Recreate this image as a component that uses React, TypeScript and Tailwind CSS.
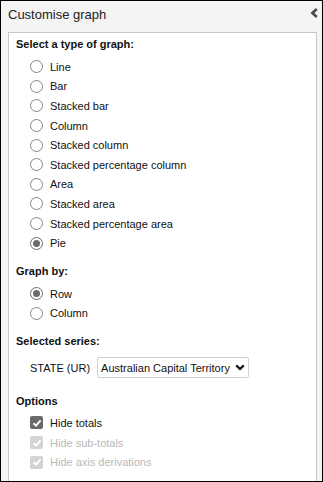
import React from "react";

const graphTypes = [
  "Line",
  "Bar",
  "Stacked bar",
  "Column",
  "Stacked column",
  "Stacked percentage column",
  "Area",
  "Stacked area",
  "Stacked percentage area",
  "Pie",
];

function Radio({ label, checked = false }: { label: string; checked?: boolean }) {
  return (
    <div className="flex h-[19.6px] items-center pl-[14px]">
      <span
        className={
          "flex h-[13px] w-[13px] items-center justify-center rounded-full border bg-white " +
          (checked ? "border-[#6b6b6b]" : "border-[#858585]")
        }
      >
        {checked && <span className="h-[7px] w-[7px] rounded-full bg-[#6b6b6b]" />}
      </span>
      <span className="ml-[7px] text-[11px] leading-[16px] text-[#111]">{label}</span>
    </div>
  );
}

function Checkbox({ label, disabled = false }: { label: string; disabled?: boolean }) {
  return (
    <div className="flex h-[19.6px] items-center pl-[14px]">
      <span
        className={
          "flex h-[13px] w-[13px] items-center justify-center rounded-[2px] " +
          (disabled ? "bg-[#d4d4d4]" : "bg-[#6b6b6b]")
        }
      >
        <svg width="10" height="10" viewBox="0 0 10 10">
          <polyline points="1.5,5.2 4,7.6 8.6,2.4" fill="none" stroke="white" strokeWidth="1.9" />
        </svg>
      </span>
      <span
        className={
          "ml-[7px] text-[11px] leading-[16px] " + (disabled ? "text-[#b8b8b8]" : "text-[#111]")
        }
      >
        {label}
      </span>
    </div>
  );
}

function Heading({ children, className = "" }: { children: React.ReactNode; className?: string }) {
  return <div className={"text-[11px] font-bold leading-[16px] text-[#111] " + className}>{children}</div>;
}

export default function App() {
  return (
    <div
      className="flex h-[482px] w-[323px] flex-col overflow-hidden border border-black bg-[#f4f4f4]"
      style={{ fontFamily: '"Liberation Sans", Arial, sans-serif' }}
    >
      <div className="flex h-[31px] shrink-0 items-start justify-between pl-[7px] pr-[3px] pt-[6px]">
        <span className="text-[13px] leading-[16px] text-[#222]">Customise graph</span>
        <svg width="9" height="10" viewBox="0 0 9 10" className="mt-[1px]">
          <polyline points="6.8,1 2.4,5 6.8,9" fill="none" stroke="#4a4a4a" strokeWidth="2.6" />
        </svg>
      </div>

      <div className="ml-[7px] w-[309px] flex-1 border border-b-0 border-[#c8c8c8] bg-white pl-[7px]">
        <Heading className="mt-[3px]">Select a type of graph:</Heading>
        <div className="mt-[5px]">
          {graphTypes.map((t) => (
            <Radio key={t} label={t} checked={t === "Pie"} />
          ))}
        </div>

        <Heading className="mt-[10px]">Graph by:</Heading>
        <div className="mt-[5px]">
          <Radio label="Row" checked />
          <Radio label="Column" />
        </div>

        <Heading className="mt-[10px]">Selected series:</Heading>
        <div className="mt-[8px] flex items-center pl-[14px]">
          <span className="text-[11px] leading-[16px] text-[#111]">STATE (UR)</span>
          <div className="ml-[7px] flex h-[21px] w-[152px] items-center justify-between rounded-[2px] border border-[#d0d0d0] bg-white pl-[3px] pr-[3px]">
            <span className="text-[11px] leading-[16px] text-[#111]">Australian Capital Territory</span>
            <svg width="10" height="7" viewBox="0 0 10 7">
              <polyline points="1.2,1.4 5,5 8.8,1.4" fill="none" stroke="#111" strokeWidth="2.2" />
            </svg>
          </div>
        </div>

        <Heading className="mt-[15px]">Options</Heading>
        <div className="mt-[4px]">
          <Checkbox label="Hide totals" />
          <Checkbox label="Hide sub-totals" disabled />
          <Checkbox label="Hide axis derivations" disabled />
        </div>
      </div>
    </div>
  );
}
